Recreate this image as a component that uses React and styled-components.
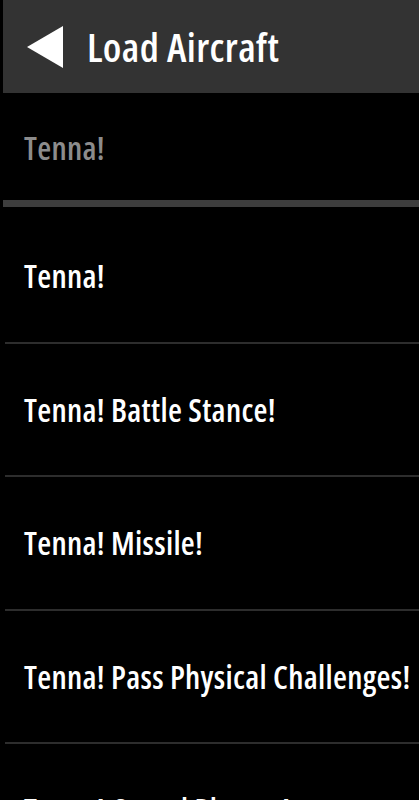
import React from 'react';
import styled, { createGlobalStyle } from 'styled-components';

const GlobalStyle = createGlobalStyle`
    body {
        margin: 0;
        background: #000000;
        font-family: "Open Sans", "DejaVu Sans", sans-serif;
        font-stretch: 77%;
        overflow: hidden;
    }
`;

const Screen = styled.div`
    width: 419px;
    height: 800px;
    padding-left: 3px;
    box-sizing: border-box;
    background: #000000;
    overflow: hidden;
`;

const Header = styled.div`
    height: 93px;
    background-color: #333333;
    display: flex;
    align-items: center;
    padding-left: 24px;
    gap: 23px;
`;

const Title = styled.div`
    color: #ffffff;
    font-size: 40px;
    font-weight: 600;
    letter-spacing: 0.4px;
`;

const Current = styled.div`
    height: 114px;
    display: flex;
    align-items: center;
    padding-left: 21px;
    padding-top: 2px;
    box-sizing: border-box;
    color: #8c8c8c;
    font-size: 32px;
    font-weight: 600;
    letter-spacing: 0.3px;
    border-bottom: solid 7px #3d3d3d;
`;

const List = styled.div`
    display: flex;
    flex-direction: column;
    margin-top: 3px;
`;

const Row = styled.div`
    height: 133.5px;
    flex-shrink: 0;
    display: flex;
    align-items: center;
    padding-left: 19px;
    margin-left: 2px;
    box-sizing: border-box;
    border-bottom: solid 2px #2d2d2d;
    color: #ffffff;
    font-size: 32px;
    font-weight: 600;
    letter-spacing: 0.3px;
    white-space: nowrap;
`;

const BackArrow = () => (
    <svg width="37" height="42" viewBox="0 0 37 42">
        <polygon points="0,21 36,0 36,42" fill="#ffffff" />
    </svg>
);

const items = [
    'Tenna!',
    'Tenna! Battle Stance!',
    'Tenna! Missile!',
    'Tenna! Pass Physical Challenges!',
    'Tenna! Crowd Pleaser!',
];

export default function App() {
    return (
        <Screen>
            <GlobalStyle />
            <Header>
                <BackArrow />
                <Title>Load Aircraft</Title>
            </Header>
            <Current>Tenna!</Current>
            <List>
                {items.map((item) => (
                    <Row key={item}>{item}</Row>
                ))}
            </List>
        </Screen>
    );
}
